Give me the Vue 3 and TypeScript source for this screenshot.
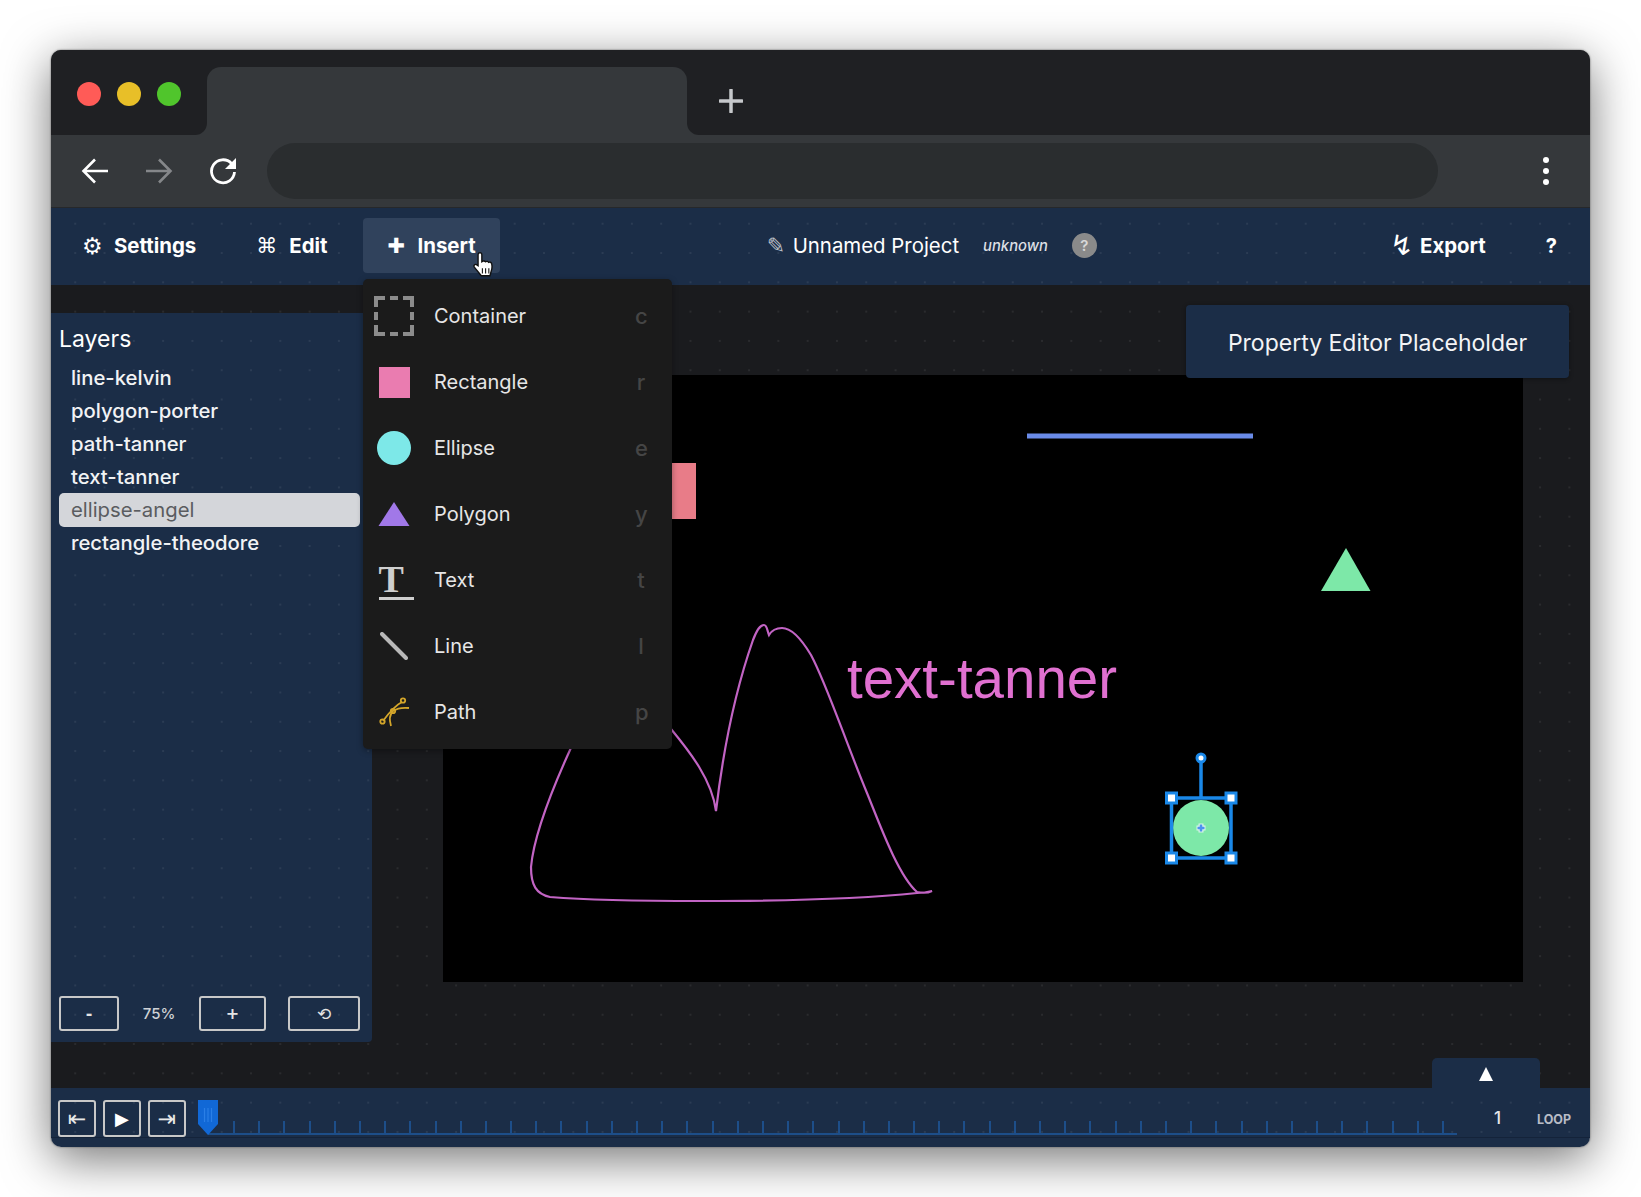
<template>
  <div class="page">
    <div class="window">
      <div class="tab-strip">
        <div class="traffic">
          <span class="light red"></span>
          <span class="light yellow"></span>
          <span class="light green"></span>
        </div>
        <div class="tab-slot"><div class="tab"></div></div>
        <div class="strip-rest">
          <svg class="new-tab" width="24" height="24" viewBox="0 0 24 24">
            <path d="M12 1v22M1 12h22" stroke="#c6c8cb" stroke-width="3.500" stroke-linecap="round" />
          </svg>
        </div>
      </div>

      <div class="toolbar">
        <svg class="tool-icon" width="28" height="26" viewBox="0 0 28 26" fill="none" stroke="#fff" stroke-width="2.6">
          <path d="M27 13H3M14 1.500 2.500 13 14 24.500" />
        </svg>
        <svg class="tool-icon" width="28" height="26" viewBox="0 0 28 26" fill="none" stroke="#85878a" stroke-width="2.600">
          <path d="M1 13h24M14 1.500 25.500 13 14 24.500" />
        </svg>
        <svg class="tool-icon" width="28" height="28" viewBox="0 0 28 28" fill="none">
          <path d="M22.500 6.500A11.500 11.500 0 1 0 25.500 15" stroke="#fff" stroke-width="2.800" />
          <path d="M27 1v11H16z" fill="#fff" />
        </svg>
        <div class="address"></div>
        <div class="kebab"><span></span><span></span><span></span></div>
      </div>

      <nav class="nav-bar">
        <div class="nav-item"><span class="glyph gear">⚙</span>Settings</div>
        <div class="nav-item edit"><span class="glyph">⌘</span>Edit</div>
        <div class="nav-item active"><span class="glyph">✚</span>Insert</div>
        <div class="project">
          <span class="pencil">✎</span>
          <span class="project-name">Unnamed Project</span>
          <em class="project-user">unknown</em>
          <span class="help-badge">?</span>
        </div>
        <div class="nav-right">
          <div class="nav-item export"><span class="glyph">↯</span>Export</div>
          <div class="nav-help">?</div>
        </div>
        <svg class="hand" width="26" height="28" viewBox="0 0 24 26">
          <path d="M7 2c1.500-1 3 0 3 1.500V10l1-.5c1-.5 2 0 2.500.5 1-.7 2.200-.4 2.800.5 1-.5 2.200 0 2.700 1 .6 2 .5 5.500-.5 8l-1 3.500H9.500L3 15c-1-1.500.5-3.200 2-2.300l1.500 1V4c0-1 0-1.500.5-2z" fill="#fff" stroke="#111" stroke-width="1.300" />
          <path d="M10.500 16v5M13.500 16v5M16.500 16v5" stroke="#111" stroke-width="1" />
        </svg>
      </nav>

      <main class="stage">
        <aside class="layers">
          <h2 class="layers-title">Layers</h2>
          <ul class="layer-list">
            <li v-for="layer in layers" :key="layer" class="layer" :class="{ selected: layer === selectedLayer }">{{ layer }}</li>
          </ul>
          <div class="zoom-row">
            <button class="zoom-btn minus">-</button>
            <span class="zoom-value">75%</span>
            <button class="zoom-btn plus">+</button>
            <button class="zoom-btn reset">⟲</button>
          </div>
        </aside>

        <div class="canvas">
          <!-- viewBox starts at the canvas corner in page pixels -->
          <svg class="drawing" width="1080" height="607" viewBox="443 375 1080 607">
            <rect x="640" y="463" width="56" height="56" fill="#e87c88" />
            <path d="M1027 436H1253" stroke="#6a8be8" stroke-width="5" />
            <path d="M1346 548 1370.500 591H1321z" fill="#7de8a8" />
            <text x="847" y="698" class="canvas-text">text-tanner</text>
            <path class="scribble" d="M671 729C690 752 712 780 716 811C722 760 732 700 753 640C757 630 760 625 764 625C767 625 767 630 769 635C772 630 777 628 782 628C792 628 802 640 811 655C827 685 845 740 867 793C880 825 898 875 917 892C922 893 928 893 932 891C925 893 920 893 917 893C870 898 800 901 700 901C650 901 600 901 550 897C536 894 531 885 531 867C533 845 545 805 570 750C600 680 620 640 640 640C650 660 660 716 671 729" />
            <circle cx="1201" cy="828" r="28" fill="#7de8a8" />
            <path d="M1201 758V798M1171.500 798H1231V858H1171.500z" fill="none" stroke="#1a88e8" stroke-width="3.500" />
            <path d="M1201 823.500v9M1196.500 828h9" stroke="#d8f4e6" stroke-width="5" />
            <path d="M1201 824.500v7M1197.500 828h7" stroke="#4d92f0" stroke-width="2.500" />
            <circle cx="1201" cy="758" r="4" fill="#fff" stroke="#1a88e8" stroke-width="3" />
            <g v-for="h in handles" :key="h.x + '-' + h.y">
              <rect :x="h.x - 5" :y="h.y - 5" width="10" height="10" fill="#fff" stroke="#1a88e8" stroke-width="3" />
            </g>
          </svg>
        </div>

        <div class="property-panel">Property Editor Placeholder</div>

        <div class="insert-menu">
          <div v-for="item in insertItems" :key="item.label" class="menu-row">
            <span class="menu-icon">
              <svg v-if="item.label === 'Container'" width="40" height="40" viewBox="0 0 40 40" fill="none" stroke="#8c8c8c" stroke-width="4">
                <path d="M2 11V2H11M16 2H24M29 2H38V11M38 16V24M38 29V38H29M24 38H16M11 38H2V29M2 24V16" />
              </svg>
              <span v-else-if="item.label === 'Rectangle'" class="shape-rect"></span>
              <span v-else-if="item.label === 'Ellipse'" class="shape-ellipse"></span>
              <svg v-else-if="item.label === 'Polygon'" width="32" height="26" viewBox="0 0 32 26">
                <path d="M16 1 31.500 25H.5z" fill="#a178e8" />
              </svg>
              <span v-else-if="item.label === 'Text'" class="shape-text">T</span>
              <svg v-else-if="item.label === 'Line'" width="28" height="28" viewBox="0 0 28 28">
                <path d="M2 2 26 26" stroke="#b9b9b9" stroke-width="4" stroke-linecap="round" />
              </svg>
              <svg v-else width="40" height="40" viewBox="0 0 40 40" fill="none" stroke="#d4a62a" stroke-width="1.800">
                <path d="M9 29Q20 14 28 10" />
                <path d="M17 34Q14 24 19 19Q25 15 35 16" />
                <circle cx="8.500" cy="29.500" r="2.200" />
                <circle cx="19" cy="19" r="2.200" />
                <circle cx="29" cy="8.500" r="2.200" />
              </svg>
            </span>
            <span class="menu-label">{{ item.label }}</span>
            <span class="menu-key">{{ item.key }}</span>
          </div>
        </div>
      </main>

      <footer class="timeline">
        <div class="timeline-toggle"></div>
        <button class="play-btn">⇤</button>
        <button class="play-btn play">▶</button>
        <button class="play-btn">⇥</button>
        <div class="track">
          <span v-for="n in tickCount" :key="n" class="tick"></span>
          <svg class="scrubber" width="20" height="35" viewBox="0 0 20 35">
            <path d="M0 0H20V24L10 35 0 24z" fill="#1168d6" />
            <path d="M6.500 8v14M10 8v14M13.500 8v14" stroke="#2a7fe6" stroke-width="1.200" />
          </svg>
        </div>
        <span class="frame">1</span>
        <span class="loop">LOOP</span>
      </footer>
    </div>
  </div>
</template>

<script setup lang="ts">
interface InsertItem {
  label: string
  key: string
}

const layers: string[] = ['line-kelvin', 'polygon-porter', 'path-tanner', 'text-tanner', 'ellipse-angel', 'rectangle-theodore']
const selectedLayer = 'ellipse-angel'

const insertItems: InsertItem[] = [
  { label: 'Container', key: 'c' },
  { label: 'Rectangle', key: 'r' },
  { label: 'Ellipse', key: 'e' },
  { label: 'Polygon', key: 'y' },
  { label: 'Text', key: 't' },
  { label: 'Line', key: 'l' },
  { label: 'Path', key: 'p' },
]

const handles = [
  { x: 1171.5, y: 798 },
  { x: 1231, y: 798 },
  { x: 1171.5, y: 858 },
  { x: 1231, y: 858 },
]

const tickCount = 49
</script>

<style>
body {
  background: #fff;
}
</style>

<style scoped>
.page {
  width: 1641px;
  height: 1197px;
  padding: 50px 51px;
  box-sizing: border-box;
  overflow: hidden;
  background: #fff;
  font-family: Inter, "Liberation Sans", sans-serif;
}

.window {
  width: 1539px;
  height: 1097px;
  display: flex;
  flex-direction: column;
  border-radius: 10px;
  overflow: hidden;
  box-shadow: 0 0 2px #555, 0 12px 48px rgba(0, 0, 0, 0.55);
}

/* Browser chrome */
.tab-strip {
  height: 85px;
  flex: none;
  display: flex;
  background: #35383b;
}

.traffic {
  width: 156px;
  flex: none;
  display: flex;
  gap: 16px;
  padding: 32px 0 0 26px;
  box-sizing: border-box;
  background: #1f2023;
  border-bottom-right-radius: 12px;
}

.light {
  width: 24px;
  height: 24px;
  border-radius: 50%;
}

.red { background: #ff5b57; }
.yellow { background: #e8bf28; }
.green { background: #50c52c; }

.tab-slot {
  width: 480px;
  flex: none;
  padding-top: 17px;
  box-sizing: border-box;
  background: #1f2023;
}

.tab {
  height: 100%;
  background: #35383b;
  border-radius: 14px 14px 0 0;
}

.strip-rest {
  flex: 1;
  background: #1f2023;
  border-bottom-left-radius: 12px;
}

.new-tab {
  display: block;
  margin: 39px 0 0 32px;
}

.toolbar {
  height: 73px;
  flex: none;
  display: flex;
  align-items: center;
  background: #35383b;
  border-bottom: 1px solid #26282b;
  box-sizing: border-box;
  padding-left: 30px;
}

.tool-icon {
  margin-right: 36px;
}

.tool-icon:nth-child(3) {
  margin-left: 0;
  margin-right: 30px;
}

.address {
  width: 1171px;
  height: 56px;
  border-radius: 28px;
  background: #2a2d2f;
}

.kebab {
  margin-left: 105px;
  display: flex;
  flex-direction: column;
  gap: 5px;
}

.kebab span {
  width: 6px;
  height: 6px;
  border-radius: 50%;
  background: #fff;
}

/* App nav */
.nav-bar {
  height: 77px;
  flex: none;
  position: relative;
  display: flex;
  align-items: center;
  padding: 0 0 2px 9px;
  box-sizing: border-box;
  gap: 12px;
  color: #fff;
  background-color: #1b2d47;
  background-image: radial-gradient(circle, rgba(255, 255, 255, 0.07) 1px, transparent 1.5px);
  background-size: 29.300px 29.300px;
  background-position: 2px 4px;
  background-attachment: fixed;
}

.nav-item {
  height: 55px;
  padding: 0 24px;
  display: flex;
  align-items: center;
  border-radius: 4px;
  font-size: 20.400px;
  font-weight: 700;
}

.nav-item.active {
  background: #30425c;
}

.glyph {
  width: 30px;
  flex: none;
  font-family: "DejaVu Sans", sans-serif;
  font-weight: 400;
  font-size: 21px;
}

.gear {
  font-size: 23px;
  margin-left: -2px;
  width: 32px;
}

.edit .glyph {
  width: 33px;
}

.project {
  margin-left: 255px;
  display: flex;
  align-items: center;
}

.pencil {
  width: 26px;
  flex: none;
  font-family: "DejaVu Sans", sans-serif;
  font-size: 22px;
  color: #b8bcc4;
}

.project-name {
  font-size: 20.400px;
  font-weight: 400;
}

.project-user {
  margin-left: 24px;
  font-size: 14.800px;
  font-weight: 500;
  color: #dcdfe4;
}

.help-badge {
  width: 25px;
  height: 25px;
  margin-left: 24px;
  border-radius: 50%;
  background: #8a8a8a;
  color: #d8d8d8;
  font-size: 15px;
  font-weight: 600;
  display: flex;
  align-items: center;
  justify-content: center;
}

.nav-right {
  margin-left: auto;
  display: flex;
  align-items: center;
}

.export .glyph {
  font-size: 28px;
}

.nav-help {
  margin: 0 33px 0 36px;
  font-size: 20px;
  font-weight: 700;
}

.hand {
  position: absolute;
  left: 420px;
  top: 43px;
}

/* Work area */
.stage {
  flex: 1;
  min-height: 0;
  position: relative;
  display: flex;
  background-color: #1a1b1e;
  background-image: radial-gradient(circle, rgba(255, 255, 255, 0.07) 1px, transparent 1.5px);
  background-size: 29.300px 29.300px;
  background-position: 2px 4px;
  background-attachment: fixed;
}

.layers {
  width: 321px;
  flex: none;
  margin: 28px 0 46px;
  padding: 11px 12px 11px 8px;
  box-sizing: border-box;
  display: flex;
  flex-direction: column;
  color: #fff;
  background-color: #1b2d47;
  background-image: radial-gradient(circle, rgba(255, 255, 255, 0.07) 1px, transparent 1.5px);
  background-size: 29.300px 29.300px;
  background-position: 2px 4px;
  background-attachment: fixed;
  border-bottom-right-radius: 4px;
}

.layers-title {
  margin: 0;
  font-size: 23px;
  line-height: 30px;
  font-weight: 400;
}

.layer-list {
  list-style: none;
  margin: 7px 0 0;
  padding: 0;
  flex: 1;
}

.layer {
  height: 33px;
  padding-left: 12px;
  display: flex;
  align-items: center;
  font-size: 20.300px;
  font-weight: 500;
  border-radius: 5px;
  color: #f2f3f5;
}

.layer.selected {
  background: #d4d6da;
  color: #5a5c60;
  font-weight: 400;
  height: 34px;
  padding-bottom: 2px;
  box-sizing: border-box;
  margin-bottom: -1px;
}

.zoom-row {
  display: flex;
  align-items: center;
}

.zoom-btn {
  height: 35px;
  padding: 0;
  box-sizing: border-box;
  background: transparent;
  border: 2px solid #c8c8c8;
  border-radius: 3px;
  color: #e4e4e4;
  font-family: "DejaVu Sans", sans-serif;
  font-weight: 700;
  font-size: 16px;
}

.minus { width: 60px; }
.plus { width: 67px; }
.reset { width: 72px; margin-left: 22px; font-weight: 400; font-size: 17px; }

.zoom-value {
  width: 80px;
  text-align: center;
  font-size: 15px;
  font-weight: 500;
  color: #cfd2d6;
}

.canvas {
  flex: none;
  width: 1080px;
  height: 607px;
  margin: 90px 0 0 71px;
  background: #000;
}

.drawing {
  display: block;
}

.canvas-text {
  font-family: "Liberation Sans", Arial, sans-serif;
  font-size: 56.500px;
  fill: #e070d0;
}

.scribble {
  fill: none;
  stroke: #c264c4;
  stroke-width: 2.200;
}

.property-panel {
  position: absolute;
  left: 1135px;
  top: 20px;
  width: 383px;
  height: 73px;
  padding-top: 3px;
  box-sizing: border-box;
  display: flex;
  align-items: center;
  justify-content: center;
  border-radius: 4px;
  color: #f3f4f6;
  font-size: 23px;
  background: #1b2d47;
  box-shadow: 0 1px 4px rgba(0, 0, 0, 0.4);
}

.insert-menu {
  position: absolute;
  left: 312px;
  top: -6px;
  width: 309px;
  height: 470px;
  padding: 4px 0;
  box-sizing: border-box;
  border-radius: 5px;
  background: #1b1b1b;
  box-shadow: 0 2px 6px rgba(0, 0, 0, 0.35);
}

.menu-row {
  height: 66px;
  display: flex;
  align-items: center;
  padding: 0 25px 0 11px;
}

.menu-icon {
  width: 40px;
  height: 40px;
  flex: none;
  display: flex;
  align-items: center;
  justify-content: center;
  position: relative;
}

.menu-icon svg {
  display: block;
}

.shape-rect {
  width: 31px;
  height: 31px;
  background: #ea7cb0;
}

.shape-ellipse {
  width: 34px;
  height: 34px;
  border-radius: 50%;
  background: #7de8e8;
}

.shape-text {
  width: 35px;
  margin-left: 4px;
  font-family: "Liberation Serif", serif;
  font-size: 38px;
  font-weight: 700;
  line-height: 36px;
  color: #cfcfcf;
  border-bottom: 3px solid #cfcfcf;
  text-align: left;
}

.menu-label {
  margin-left: 20px;
  flex: 1;
  font-size: 20px;
  color: #e6e6e6;
}

.menu-key {
  width: 12px;
  text-align: center;
  font-size: 22px;
  font-weight: 500;
  color: #454545;
}

/* Timeline */
.timeline {
  height: 59px;
  flex: none;
  position: relative;
  display: flex;
  align-items: flex-start;
  padding: 12px 0 0 7px;
  box-sizing: border-box;
  gap: 7px;
  background-color: #1b2d47;
  background-image: radial-gradient(circle, rgba(255, 255, 255, 0.07) 1px, transparent 1.5px);
  background-size: 29.300px 29.300px;
  background-position: 2px 4px;
  background-attachment: fixed;
}

.timeline::after {
  content: "";
  position: absolute;
  left: 0;
  right: 0;
  top: 49px;
  height: 1px;
  background: #14233a;
}

.timeline-toggle {
  position: absolute;
  left: 1381px;
  top: -30px;
  width: 108px;
  height: 30px;
  border-radius: 5px 5px 0 0;
  background: #1b2d47;
}

.timeline-toggle::after {
  content: "";
  position: absolute;
  left: 47px;
  top: 9px;
  border-left: 7px solid transparent;
  border-right: 7px solid transparent;
  border-bottom: 14px solid #fff;
}

.play-btn {
  width: 38px;
  height: 37px;
  padding: 0;
  box-sizing: border-box;
  background: transparent;
  border: 2px solid #c8c8c8;
  border-radius: 3px;
  color: #e8e8e8;
  font-family: "DejaVu Sans", sans-serif;
  font-size: 22px;
  line-height: 30px;
}

.play-btn.play {
  font-size: 18px;
  color: #fff;
}

.track {
  width: 1249px;
  height: 35px;
  margin-left: 15px;
  position: relative;
  display: flex;
  align-items: flex-end;
  padding-left: 25px;
  box-sizing: border-box;
  border-bottom: 2px solid #1d4e89;
}

.tick {
  width: 2px;
  height: 12px;
  margin-right: 23.200px;
  flex: none;
  background: #1d4e89;
}

.scrubber {
  position: absolute;
  left: -10px;
  top: 0;
}

.frame {
  position: absolute;
  left: 1443px;
  top: 20px;
  font-size: 17px;
  font-weight: 500;
  color: #e4e6ea;
}

.loop {
  position: absolute;
  left: 1486px;
  top: 24px;
  font-size: 12.500px;
  font-weight: 700;
  color: #b8bcc6;
}
</style>
